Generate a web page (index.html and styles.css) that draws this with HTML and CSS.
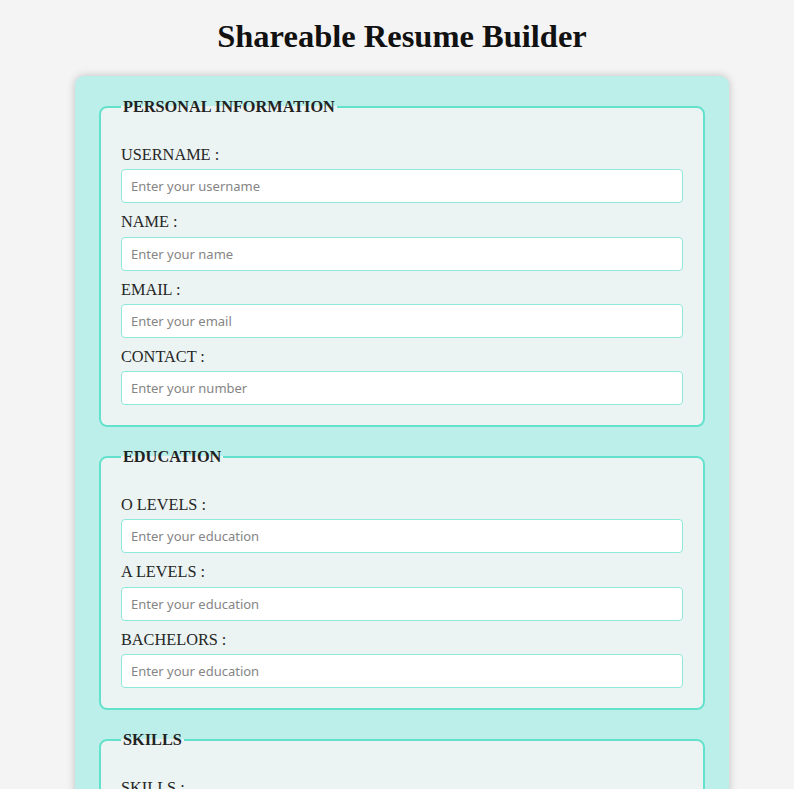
FILE: index.html
```html
<!DOCTYPE html>
<html lang="en">
<head>
<meta charset="utf-8">
<title>Shareable Resume Builder</title>
<link rel="stylesheet" href="styles.css">
</head>
<body>
<h1 class="title">Shareable Resume Builder</h1>
<form class="container">
  <fieldset class="section">
    <legend class="legend">PERSONAL INFORMATION</legend>
    <label class="label" for="username">USERNAME :</label>
    <input class="field" id="username" type="text" placeholder="Enter your username">
    <label class="label" for="name">NAME :</label>
    <input class="field" id="name" type="text" placeholder="Enter your name">
    <label class="label" for="email">EMAIL :</label>
    <input class="field" id="email" type="email" placeholder="Enter your email">
    <label class="label" for="contact">CONTACT :</label>
    <input class="field" id="contact" type="text" placeholder="Enter your number">
  </fieldset>
  <fieldset class="section">
    <legend class="legend">EDUCATION</legend>
    <label class="label" for="olevels">O LEVELS :</label>
    <input class="field" id="olevels" type="text" placeholder="Enter your education">
    <label class="label" for="alevels">A LEVELS :</label>
    <input class="field" id="alevels" type="text" placeholder="Enter your education">
    <label class="label" for="bachelors">BACHELORS :</label>
    <input class="field" id="bachelors" type="text" placeholder="Enter your education">
  </fieldset>
  <fieldset class="section">
    <legend class="legend">SKILLS</legend>
    <label class="label" for="skills">SKILLS :</label>
    <input class="field" id="skills" type="text" placeholder="Enter your skills">
  </fieldset>
</form>
</body>
</html>
```

FILE: styles.css
```css
html, body {
  margin: 0;
  background: #f4f4f4;
}
body {
  padding: 0 0 40px 10px;
  font-family: "Liberation Serif", "Times New Roman", serif;
  color: #333;
}
.title {
  margin: 0;
  padding-top: 18px;
  text-align: center;
  font-size: 32.5px;
  font-weight: bold;
  color: #111;
  line-height: 36px;
}
.container {
  box-sizing: border-box;
  width: 654px;
  margin: 22px auto 0;
  padding: 21px 24px 20px;
  background: #bcefe9;
  border-radius: 9px;
  box-shadow: 0 0 8px rgba(0, 0, 0, 0.22);
}
.section {
  margin: 0 0 20.5px;
  padding: 19px 20px 19.5px;
  background: #ebf4f3;
  border: 2px solid #62e1cd;
  border-radius: 8px;
  min-width: 0;
}
.legend {
  padding: 0 2px;
  font-size: 16.3px;
  font-weight: bold;
  color: #222;
}
.label {
  display: block;
  margin: 10px 0 5.3px;
  font-size: 16.3px;
  line-height: 18px;
  color: #262626;
}
.field {
  display: block;
  box-sizing: border-box;
  width: 100%;
  height: 34px;
  margin: 0;
  padding: 0 9px;
  border: 1.5px solid #8fe9da;
  border-radius: 4px;
  background: #fff;
  font-family: "Noto Sans", "Open Sans", sans-serif;
  font-size: 13px;
  color: #333;
  outline: none;
}
.field::placeholder {
  color: #858585;
}
```
